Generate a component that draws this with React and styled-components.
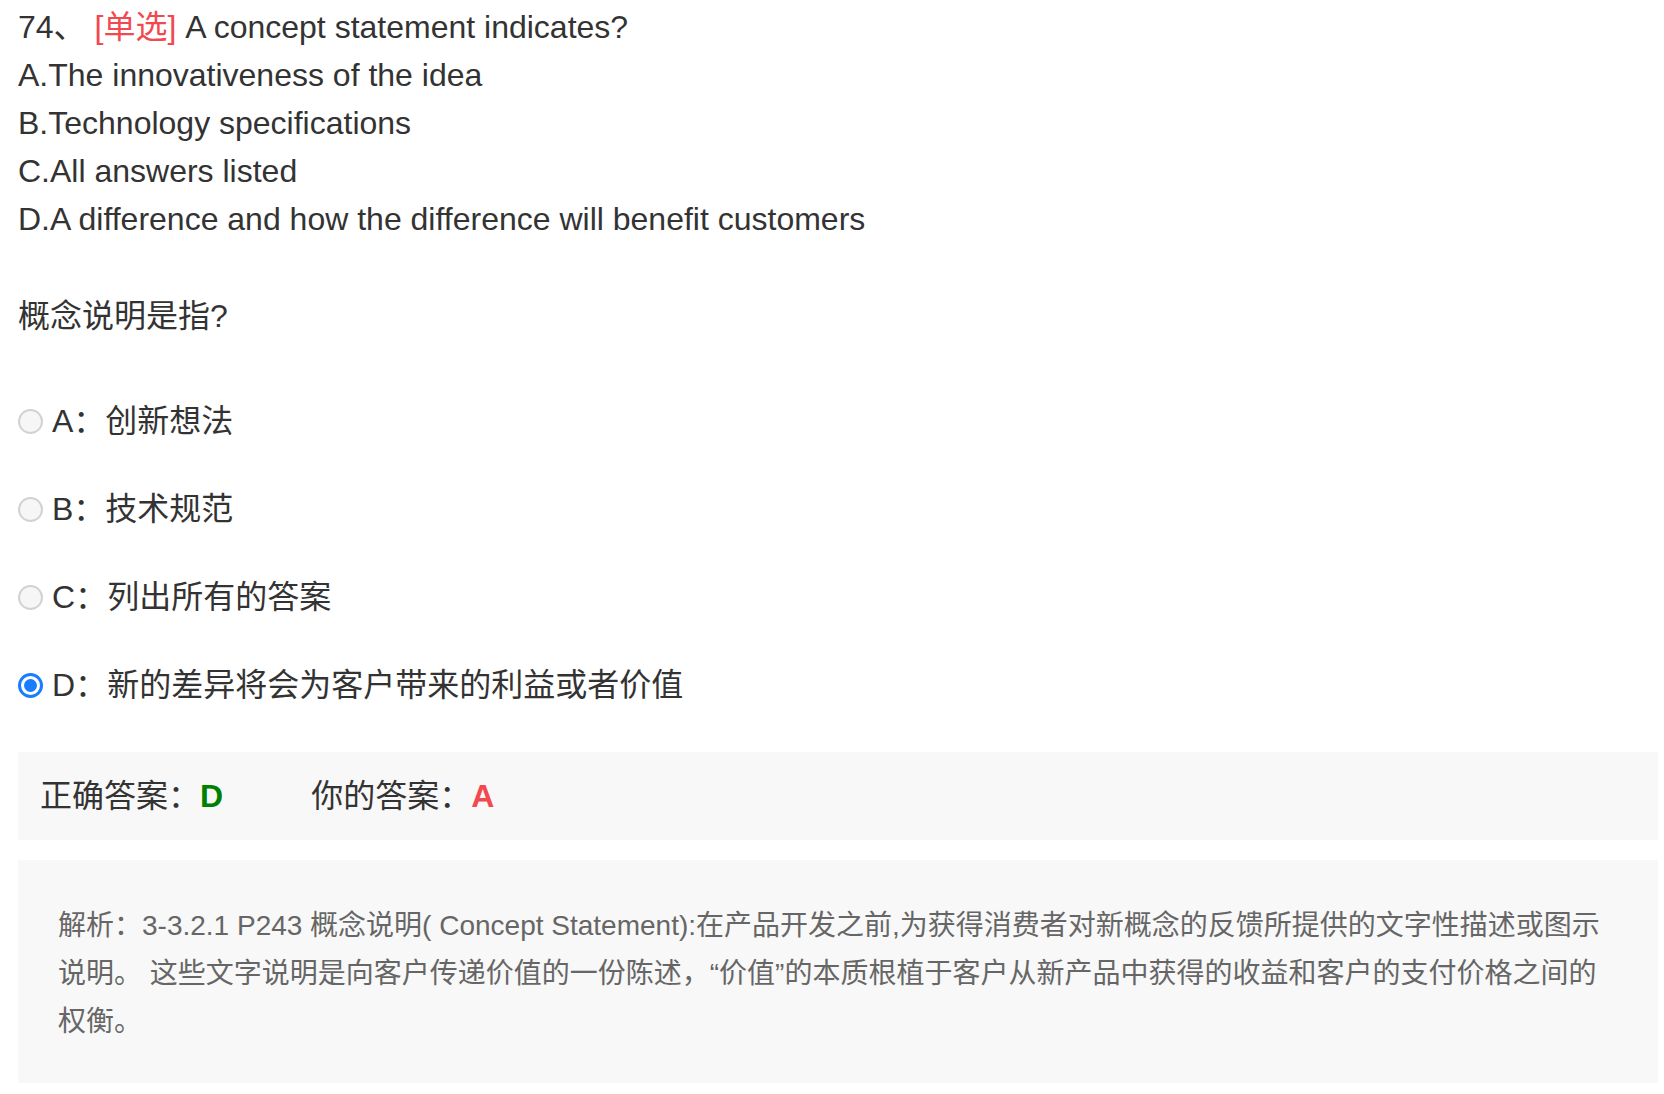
import React from "react";
import styled, { createGlobalStyle } from "styled-components";

const Global = createGlobalStyle`
  html, body { margin: 0; padding: 0; background: #ffffff; }
  body {
    font-family: "Liberation Sans", "Noto Sans CJK SC", sans-serif;
    color: #333333;
  }
`;

const Page = styled.div`
  padding: 3px 6px 10px 18px;
`;

const Stem = styled.div`
  font-size: 32px;
  line-height: 48px;
  color: #333333;
`;

const Line = styled.div`
  white-space: nowrap;
`;

const Tag = styled.span`
  color: #f2494e;
`;

const Title = styled.div`
  margin-top: 49px;
  font-size: 32px;
  line-height: 48px;
  color: #333333;
`;

const Options = styled.div`
  margin-top: 57px;
  display: flex;
  flex-direction: column;
  gap: 40px;
`;

const Option = styled.label`
  display: flex;
  align-items: center;
  height: 48px;
  font-size: 32px;
  line-height: 48px;
  color: #333333;
`;

const Radio = styled.span`
  box-sizing: border-box;
  width: 25px;
  height: 25px;
  border-radius: 50%;
  margin-right: 9px;
  flex: none;
  position: relative;
  border: ${(p) => (p.$checked ? "3px solid #1a7cff" : "2px solid #d2d2d2")};
  background: ${(p) => (p.$checked ? "#ffffff" : "#f6f6f6")};

  &::after {
    content: "";
    display: ${(p) => (p.$checked ? "block" : "none")};
    position: absolute;
    left: 3px;
    top: 3px;
    width: 13px;
    height: 13px;
    border-radius: 50%;
    background: #1a7cff;
  }
`;

const AnswerBar = styled.div`
  margin-top: 43px;
  background: #f8f8f8;
  padding: 20px 22px;
  font-size: 32px;
  line-height: 48px;
  color: #333333;
  display: flex;
  align-items: center;
`;

const AnswerGroup = styled.div`
  display: flex;
  align-items: center;
  & + & {
    margin-left: 88px;
  }
`;

const AnswerValue = styled.span`
  font-weight: bold;
  color: ${(p) => p.$color};
`;

const Explain = styled.div`
  margin-top: 20px;
  background: #f8f8f8;
  padding: 42px 40px 37px 40px;
  font-size: 28px;
  line-height: 48px;
  color: #666666;
`;

const options = [
  { key: "A", text: "创新想法" },
  { key: "B", text: "技术规范" },
  { key: "C", text: "列出所有的答案" },
  { key: "D", text: "新的差异将会为客户带来的利益或者价值", checked: true },
];

export default function App() {
  return (
    <>
      <Global />
      <Page>
        <Stem>
          <Line>
            74、 <Tag>[单选]</Tag> A concept statement indicates?
          </Line>
          <Line>A.The innovativeness of the idea</Line>
          <Line>B.Technology specifications</Line>
          <Line>C.All answers listed</Line>
          <Line>D.A difference and how the difference will benefit customers</Line>
        </Stem>
        <Title>概念说明是指?</Title>
        <Options>
          {options.map((o) => (
            <Option key={o.key}>
              <Radio $checked={o.checked} />
              {o.key}：{o.text}
            </Option>
          ))}
        </Options>
        <AnswerBar>
          <AnswerGroup>
            正确答案：<AnswerValue $color="#008000">D</AnswerValue>
          </AnswerGroup>
          <AnswerGroup>
            你的答案：<AnswerValue $color="#f2494e">A</AnswerValue>
          </AnswerGroup>
        </AnswerBar>
        <Explain>
          解析：3-3.2.1 P243 概念说明( Concept Statement):在产品开发之前,为获得消费者对新概念的反馈所提供的文字性描述或图示
          说明。 这些文字说明是向客户传递价值的一份陈述，“价值”的本质根植于客户从新产品中获得的收益和客户的支付价格之间的
          <br />
          权衡。
        </Explain>
      </Page>
    </>
  );
}
